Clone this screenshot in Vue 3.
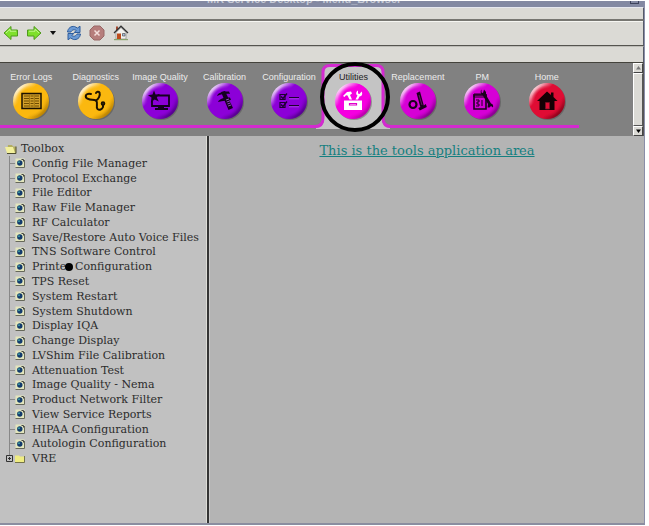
<script setup>
import { ref } from 'vue'

const tabs = [
  { id: 'logs', label: 'Error Logs', color: '#fbb80f', dark: '#a87400' },
  { id: 'diag', label: 'Diagnostics', color: '#fbb80f', dark: '#a87400' },
  { id: 'image', label: 'Image Quality', color: '#8c00d8', dark: '#46007a' },
  { id: 'calib', label: 'Calibration', color: '#8c00d8', dark: '#46007a' },
  { id: 'config', label: 'Configuration', color: '#8c00d8', dark: '#46007a' },
  { id: 'util', label: 'Utilities', color: '#f600e0', dark: '#a8009a' },
  { id: 'replace', label: 'Replacement', color: '#d600d6', dark: '#74007c' },
  { id: 'pm', label: 'PM', color: '#d600d6', dark: '#74007c' },
  { id: 'home', label: 'Home', color: '#e00c34', dark: '#780014' },
]
const active = ref('util')

const tools = [
  'Config File Manager',
  'Protocol Exchange',
  'File Editor',
  'Raw File Manager',
  'RF Calculator',
  'Save/Restore Auto Voice Files',
  'TNS Software Control',
  'Printer Configuration',
  'TPS Reset',
  'System Restart',
  'System Shutdown',
  'Display IQA',
  'Change Display',
  'LVShim File Calibration',
  'Attenuation Test',
  'Image Quality - Nema',
  'Product Network Filter',
  'View Service Reports',
  'HIPAA Configuration',
  'Autologin Configuration',
]
</script>

<template>
  <div class="page">
    <div class="window">
      <header class="titlebar">
        <span class="title">MR Service Desktop - Menu_Browser</span>
        <span class="winbtn"></span>
      </header>
      <div class="menubar"></div>
      <div class="toolbar">
        <button class="tool" aria-label="Back">
          <svg width="16" height="16" viewBox="0 0 16 16"><path d="M1 8 8 1.5V5h6.5v6H8v3.500z" fill="#7fe02c" stroke="#4f9a1c" /><path d="M3 8 7 4.200V6.200h6" fill="none" stroke="#c2f78e" /></svg>
        </button>
        <button class="tool" aria-label="Forward">
          <svg width="16" height="16" viewBox="0 0 16 16"><path d="M15 8 8 1.5V5H1.500v6H8v3.500z" fill="#7fe02c" stroke="#4f9a1c" /><path d="M3 6.200h6V4.200L13 8" fill="none" stroke="#c2f78e" /></svg>
        </button>
        <button class="tool arrow" aria-label="History">
          <svg width="6" height="16" viewBox="0 0 6 16"><path d="M0 6h6L3 10z" fill="#111" /></svg>
        </button>
        <button class="tool reload" aria-label="Reload">
          <svg width="16" height="16" viewBox="0 0 16 16">
            <path d="M1.500 7C2 3 5 1 8.500 1.500l3 1.500L14 1.200V7.500H8.200l2-2C8 4 6 5 5 7z" fill="#6b9ad4" stroke="#2f5d9c" />
            <path d="M14.500 9c-.5 4-3.500 6-7 5.500l-3-1.500L2 14.800V8.500h5.800l-2 2C8 12 10 11 11 9z" fill="#6b9ad4" stroke="#2f5d9c" />
          </svg>
        </button>
        <button class="tool stop" aria-label="Stop">
          <svg width="16" height="16" viewBox="0 0 16 16"><path d="M5 1h6l4 4v6l-4 4H5l-4-4V5z" fill="#b67e7c" stroke="#996866" /><path d="m5.500 5.500 5 5m0-5-5 5" stroke="#f4dfdc" stroke-width="1.500" /></svg>
        </button>
        <button class="tool home" aria-label="Home">
          <svg width="16" height="16" viewBox="0 0 16 16">
            <path d="M3 7.500 8 2.500l5 5V14H3z" fill="#f2f2ee" stroke="#888" stroke-width=".7" />
            <path d="M3 1.500h2v3L3 6z" fill="#a04830" />
            <path d="M1 8 8 1.200 15 8" fill="none" stroke="#333" stroke-width="1.300" />
            <path d="M4 8.500h4V14H4z" fill="#bd4d1c" />
            <path d="M9.500 8.500h2.500v2.500H9.500z" fill="#a9c3e4" stroke="#555" stroke-width=".7" />
            <path d="M1 14.600h14" stroke="#8aa36c" stroke-width="1.200" />
          </svg>
        </button>
      </div>
      <div class="locbar"></div>

      <div class="banner">
        <nav class="tabs">
          <button v-for="t in tabs" :key="t.id" class="tab" :class="{ active: t.id === active }" @click="active = t.id">
            <svg v-if="t.id === active" class="tabshape" width="76" height="70" viewBox="0 0 76 70">
              <path d="M1 65Q9 64 9 56V9Q9 2 16 2H60Q67 2 67 9V56Q67 64 75 65V66H1z" fill="#c4c4c4" />
              <path d="M0 63.500Q8 63.500 8 55V9Q8 2.500 15 2.500H61Q68 2.500 68 9V55Q68 63.500 76 63.500" fill="none" stroke="#d42ad0" stroke-width="3" />
            </svg>
            <span class="label">{{ t.label }}</span>
            <svg class="ball" width="38" height="38" viewBox="0 0 38 38">
              <defs>
                <linearGradient :id="'rim-' + t.id" x1=".1" y1=".1" x2=".9" y2=".9">
                  <stop offset="0" stop-color="#fff" />
                  <stop offset=".32" :stop-color="t.color" />
                  <stop offset=".7" :stop-color="t.color" />
                  <stop offset="1" :stop-color="t.dark" />
                </linearGradient>
                <radialGradient :id="'core-' + t.id">
                  <stop offset=".75" :stop-color="t.color" />
                  <stop offset="1" :stop-color="t.color" stop-opacity="0" />
                </radialGradient>
              </defs>
              <circle cx="20" cy="20" r="18" fill="#444" opacity=".4" />
              <circle cx="19" cy="19" r="18" :fill="`url(#rim-${t.id})`" />
              <circle cx="19" cy="19" r="16" :fill="`url(#core-${t.id})`" />

              <g v-if="t.id === 'logs'">
                <path d="M10 11.500h19v15H10z" fill="#d3a02a" stroke="#1c1200" stroke-width="1.500" />
                <path d="M12 14h5m1.500 0h3m1.500 0h4M12 16.500h5m1.500 0h3m1.500 0h4M12 19h5m1.500 0h3m1.500 0h4M12 21.500h5m1.500 0h3m1.500 0h4M12 24h5m1.500 0h3m1.500 0h4" stroke="#6e4c00" stroke-width="1" />
                <path d="M17.500 12.500v13M22.300 12.500v13" stroke="#8c6408" stroke-width=".7" />
              </g>
              <g v-else-if="t.id === 'diag'" fill="none" stroke="#1c1200" stroke-width="2" stroke-linecap="round">
                <path d="M14 12c-3-1-6 .5-5 3.500C10.500 18 15 17.500 19 18.500c2.500-1.500 4.500-5 3.500-8-.8-1.300-3-1-3.500 .5" />
                <path d="M19 18.500c2.500 2-.5 6 1.500 8.500 2 1.500 4.500.5 5.500-2v-2" />
                <circle cx="26" cy="21.500" r="1.300" />
              </g>
              <g v-else-if="t.id === 'image'">
                <path d="M17 13.500h11v10.500H11v-5" fill="none" stroke="#14001f" stroke-width="1.800" />
                <path d="M17 24v2h-3v2h13v-2h-4v-2z" fill="#14001f" />
                <path d="m13 8.500 1.600 4 4.400-.5-3.200 3.400 2 4-4.100-2-3.800 2.800.6-4.600L7 13.300l4.500-.8z" fill="#14001f" />
              </g>
              <g v-else-if="t.id === 'calib'" fill="#14001f">
                <path d="m15 10 4-1 8 17-4.500 2z" />
                <path d="M11 14c1-3.500 6-5 12-4.500l1 2.500c-5-.5-9 .5-13 2zm1 6c1-3 6-5 12-4.500l1 2.500c-4 0-8 1-13 2z" />
                <path d="m20 18 3-1m-2.300 3 3-1m-2.300 3 3-1m-2.300 3 3-1" stroke="#b060e0" stroke-width=".8" />
              </g>
              <g v-else-if="t.id === 'config'" fill="none" stroke="#1d0030" stroke-width="1.200">
                <path d="M10 12.500h5v5h-5zM10 20.500h5v5h-5zM19 15.500h10M19 23.500h10" />
                <path d="m11 14.500 2 2 4-5M11 22.500l2 2 4-5" stroke-width="1.400" />
                <path d="M19 16.800h10M19 24.800h10" stroke="#b05ae6" stroke-width=".7" />
              </g>
              <g v-else-if="t.id === 'util'" fill="#fff">
                <path d="M10 18.500h18V28H10z" />
                <path d="M15.500 21.500h7v1.500h-7z" fill="none" stroke="#e000cc" stroke-width="1.200" />
                <path d="m9 14 4-4 4-.5 1 2-2 1.500 2 4.500h-2.500l-2-4-1.500-.2-1.500 1.700zM21.500 17.500l2-4c-2-1-1.500-4 .5-5v3l1.500.5 2-2.500c1.500 2 .5 5-2 5L24 17.500z" />
              </g>
              <g v-else-if="t.id === 'replace'">
                <circle cx="14" cy="22.500" r="3.500" fill="none" stroke="#1b001d" stroke-width="2.200" />
                <path d="m17.500 11 3.500-1.500 3.800 14 2-1.500 1 3-7 3.500-1.500-2.500 2-1z" fill="#1b001d" />
                <path d="m20 13 3 10" stroke="#842086" stroke-width=".7" />
              </g>
              <g v-else-if="t.id === 'pm'">
                <path d="M11 13h12v14H11z" fill="none" stroke="#1b001d" stroke-width="1.600" />
                <path d="M11 12h12v3H11zM13 18h3v2h-2v2h2v2h-3m6-6v6" fill="none" stroke="#1b001d" stroke-width="1" />
                <path d="M18.500 7.500v3l1.500.5 1-3.500 2 2.500v3l5 8.500c2 .5 2.500 2 2 4l-2-1.500-1.500 1.500h-2l.5-3.500-5.500-9c-2-1-2.500-4-1-5.500z" fill="#1b001d" />
              </g>
              <g v-else>
                <path d="M9 19 19 9.500l4 3.500v-2.500h2.500V15l4 4h-3v9h-15v-9z" fill="#150004" />
                <path d="M17.500 20.500h4V27h-4z" fill="#e00c34" stroke="#7a1024" stroke-width=".8" />
              </g>
            </svg>
            <svg v-if="t.id === active" class="ring" width="72" height="72" viewBox="0 0 72 72">
              <circle cx="36" cy="36" r="33" fill="none" stroke="#000" stroke-width="4" />
            </svg>
          </button>
        </nav>
        <div class="scrollbar">
          <button class="sbtn" aria-label="Scroll up"><svg width="5" height="4" viewBox="0 0 5 4"><path d="M0 3.500h5L2.500 0z" fill="#777" /></svg></button>
          <div class="thumb"></div>
          <button class="sbtn" aria-label="Scroll down"><svg width="5" height="4" viewBox="0 0 5 4"><path d="M0 .5h5L2.500 4z" fill="#000" /></svg></button>
        </div>
      </div>

      <div class="body">
        <aside class="sidebar">
          <div class="root">
            <svg width="12" height="10" viewBox="0 0 12 10"><path d="M3 1h4l1 1.500h3V9H2z" fill="#b3ae62" /><path d="M0 3h8l2 6H2z" fill="#f3f09c" /><path d="M11 2.500V9.500H2" fill="none" stroke="#4e4d30" stroke-width="1" /></svg>
            <span>Toolbox</span>
          </div>
          <ul class="tree">
            <li v-for="name in tools" :key="name" class="node">
              <svg class="doc" width="10" height="10" viewBox="0 0 10 10">
                <path d="M.5.500h9v9h-9z" fill="#e3e6bd" /><path d="M9.500 2v7.500H.5" fill="none" stroke="#66685a" />
                <circle cx="4.800" cy="5" r="2.700" fill="#123a6c" /><circle cx="4" cy="4.200" r="1" fill="#3fa0a4" /><path d="M6.500 1.500h2v2" fill="none" stroke="#444" />
              </svg>
              <a href="#" class="link">
                <template v-if="name.startsWith('Printer')">Printe<span class="marked">r</span> Configuration</template>
                <template v-else>{{ name }}</template>
              </a>
            </li>
            <li class="node last">
              <button class="plus" aria-label="Expand VRE"><svg width="7" height="7" viewBox="0 0 7 7"><path d="M.5.500h6v6h-6zM2 3.500h3M3.500 2v3" fill="none" stroke="#333" /></svg></button>
              <svg class="doc" width="10" height="9" viewBox="0 0 10 9"><path d="M0 1.500h4l1 1h4.500V8H0z" fill="#efec82" /><path d="M9.500 2v6.500H0" fill="none" stroke="#74734a" /></svg>
              <a href="#" class="link">VRE</a>
            </li>
          </ul>
        </aside>
        <main class="main"><a href="#" class="area">This is the tools application area</a></main>
      </div>
    </div>
  </div>
</template>

<style>
body { background: #fff; }
</style>

<style scoped>
* { box-sizing: border-box; }
button { border: 0; padding: 0; margin: 0; background: none; font: inherit; color: inherit; }
svg { display: block; flex: none; }
.page { min-height: 100vh; display: flex; padding: 1px 4px 1px 0; }
.window { flex: 1; min-width: 0; display: flex; flex-direction: column; border-right: 1px solid #8a8ea8; border-bottom: 2px solid #8a8ea0; background: #dbdad5; }
.titlebar { height: 6px; background: #8389a2; overflow: hidden; display: flex; align-items: flex-end; justify-content: space-between; padding: 0 5px 3px 207px; }
.title { font: bold 11px/10px "Liberation Sans", Arial, sans-serif; color: #c5c9d6; white-space: nowrap; }
.winbtn { width: 9px; height: 9px; border: 1px solid #3d435c; }
.menubar { height: 13px; border-top: 1px solid #e6e8ef; border-bottom: 1px solid #777671; }
.toolbar { height: 26px; border-top: 1px solid #777671; border-bottom: 1px solid #55544f; display: flex; align-items: center; padding: 0 3px; box-shadow: inset 0 1px #f6f6f2; }
.tool { width: 23px; display: flex; align-items: center; }
.arrow { width: 16px; margin-left: 1px; }
.reload { width: 23px; }
.stop { width: 24px; }
.locbar { height: 17px; border-top: 1px solid #bebdb8; border-bottom: 1px solid #44433c; }
.menubar, .toolbar, .locbar { border-right: 1px solid #555a68; }
.banner { height: 73px; background: #818181; display: flex; justify-content: space-between; }
.tabs { flex: 0 1 580px; min-width: 0; height: 65px; margin-left: -1px; display: grid; grid-template-columns: repeat(9, minmax(0, 1fr)); border-bottom: 3px solid #d42ad0; }
.tab { position: relative; display: flex; flex-direction: column; align-items: center; padding-top: 9px; color: #ececec; }
.label { position: relative; font: 8px/10px "Liberation Sans", Arial, sans-serif; white-space: nowrap; }
.label { font-size: 9px; }
.active .label { color: #222; }
.ball { position: relative; }
.tabshape { position: absolute; top: 0; left: 50%; margin-left: -38px; }
.ring { position: absolute; top: -2px; left: 50%; margin-left: -34px; z-index: 2; }
.scrollbar { width: 11px; display: flex; flex-direction: column; background: #dbdad5; border-right: 1px solid #555; }
.sbtn { height: 10px; display: flex; align-items: center; justify-content: center; border: 1px solid; border-color: #fff #444 #444 #fff; }
.thumb { flex: 1; border: 1px solid; border-color: #fff #555 #555 #fff; }
.body { flex: 1; display: flex; font-family: "DejaVu Serif", "Liberation Serif", serif; }
.sidebar { flex: 0 0 209px; min-width: 0; background: #c1c1c1; border-right: 2px solid #343434; padding-top: 5px; font-size: 11px; color: #2c2c2c; white-space: nowrap; box-shadow: inset -1px 0 #dcdcd6; }
.root { height: 15px; display: flex; align-items: center; padding-left: 5px; gap: 4px; line-height: 15px; }
.tree { list-style: none; margin: 0; padding: 0; height: 310px; display: grid; grid-auto-rows: minmax(0, 1fr); }
.node { position: relative; display: flex; align-items: center; padding-left: 15px; line-height: 15px; }
.node::before { content: ""; position: absolute; left: 9px; top: 0; bottom: 0; width: 6px; background: linear-gradient(#888, #888) 0 0 / 1px 100% no-repeat, linear-gradient(#888, #888) 0 50% / 6px 1px no-repeat; }
.last::before { bottom: 50%; background: linear-gradient(#888, #888) 0 0 / 1px 100% no-repeat; }
.plus { position: absolute; left: 6px; background: #c1c1c1; }
.link { color: inherit; text-decoration: none; margin-left: 7px; }
.marked { position: relative; }
.marked::after { content: ""; position: absolute; left: -1px; top: 3px; width: 8px; height: 8px; border-radius: 50%; background: #000; }
.main { flex: 1; background: #b4b4b4; border-left: 1px solid #c8c8c8; text-align: center; padding: 4px 0 0; }
.area { font-size: 13px; line-height: 15px; color: #158080; text-decoration: underline; }
</style>
